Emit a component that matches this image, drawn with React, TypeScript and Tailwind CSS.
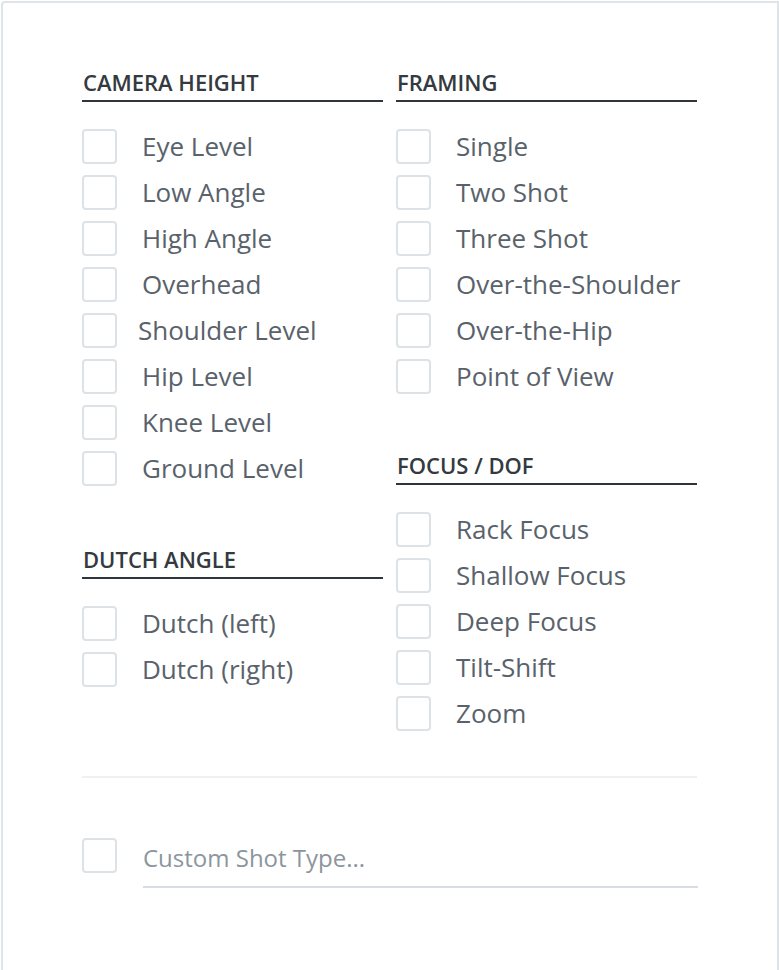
import { useState } from 'react';

type Option = { label: string; nudge?: boolean };

const CAMERA_HEIGHT: Option[] = [
  { label: 'Eye Level' },
  { label: 'Low Angle' },
  { label: 'High Angle' },
  { label: 'Overhead' },
  { label: 'Shoulder Level', nudge: true },
  { label: 'Hip Level' },
  { label: 'Knee Level' },
  { label: 'Ground Level' },
];

const DUTCH_ANGLE: Option[] = [{ label: 'Dutch (left)' }, { label: 'Dutch (right)' }];

const FRAMING: Option[] = [
  { label: 'Single' },
  { label: 'Two Shot' },
  { label: 'Three Shot' },
  { label: 'Over-the-Shoulder' },
  { label: 'Over-the-Hip' },
  { label: 'Point of View' },
];

const FOCUS: Option[] = [
  { label: 'Rack Focus' },
  { label: 'Shallow Focus' },
  { label: 'Deep Focus' },
  { label: 'Tilt-Shift' },
  { label: 'Zoom' },
];

function Box({ checked, onClick }: { checked: boolean; onClick: () => void }) {
  return (
    <button
      type="button"
      onClick={onClick}
      className={`w-[35px] h-[35px] shrink-0 rounded-[4px] border-2 ${
        checked ? 'border-[#5a636c] bg-[#5a636c]' : 'border-[#dde2e6] bg-white'
      }`}
    />
  );
}

function Section({
  title,
  options,
  className = '',
  selected,
  toggle,
}: {
  title: string;
  options: Option[];
  className?: string;
  selected: Record<string, boolean>;
  toggle: (label: string) => void;
}) {
  return (
    <div className={className}>
      <h3 className="text-[22px] leading-[30px] font-semibold text-[#343a40] pb-[3px] border-b-2 border-[#2f353b] pl-px">
        {title}
      </h3>
      <ul className="mt-[27px] flex flex-col gap-[11px]">
        {options.map((option) => (
          <li key={option.label} className="flex items-start h-[35px]">
            <Box checked={!!selected[option.label]} onClick={() => toggle(option.label)} />
            <span
              className={`text-[26px] leading-[34px] text-[#59626b] whitespace-nowrap ${
                option.nudge ? 'ml-[21px]' : 'ml-[25px]'
              }`}
            >
              {option.label}
            </span>
          </li>
        ))}
      </ul>
    </div>
  );
}

export default function App() {
  const [selected, setSelected] = useState<Record<string, boolean>>({});
  const [customChecked, setCustomChecked] = useState(false);

  const toggle = (label: string) => setSelected((prev) => ({ ...prev, [label]: !prev[label] }));

  return (
    <div className="min-h-screen bg-white pt-px pl-px" style={{ fontFamily: '"Open Sans", "Noto Sans", sans-serif' }}>
      <div className="rounded-tl-[4px] border-2 border-[#dfe4e8] bg-white pt-[64px] pl-[79px] pb-[100px]">
        <div className="grid grid-cols-[301px_301px] gap-x-[13px] items-start">
          <div>
            <Section title="CAMERA HEIGHT" options={CAMERA_HEIGHT} selected={selected} toggle={toggle} />
            <Section
              title="DUTCH ANGLE"
              options={DUTCH_ANGLE}
              className="mt-[58px]"
              selected={selected}
              toggle={toggle}
            />
          </div>
          <div>
            <Section title="FRAMING" options={FRAMING} selected={selected} toggle={toggle} />
            <Section title="FOCUS / DOF" options={FOCUS} className="mt-[56px]" selected={selected} toggle={toggle} />
          </div>
        </div>

        <div className="mt-[45px] h-[2px] w-[615px] bg-[#eef0f2]" />

        <div className="mt-[60px] flex items-start">
          <Box checked={customChecked} onClick={() => setCustomChecked((v) => !v)} />
          <input
            type="text"
            placeholder="Custom Shot Type..."
            className="ml-[26px] w-[555px] h-[50px] pb-[10px] border-b-2 border-[#d7dde3] bg-transparent text-[24px] leading-[38px] text-[#59626b] outline-none placeholder:text-[#8c959d]"
          />
        </div>
      </div>
    </div>
  );
}
